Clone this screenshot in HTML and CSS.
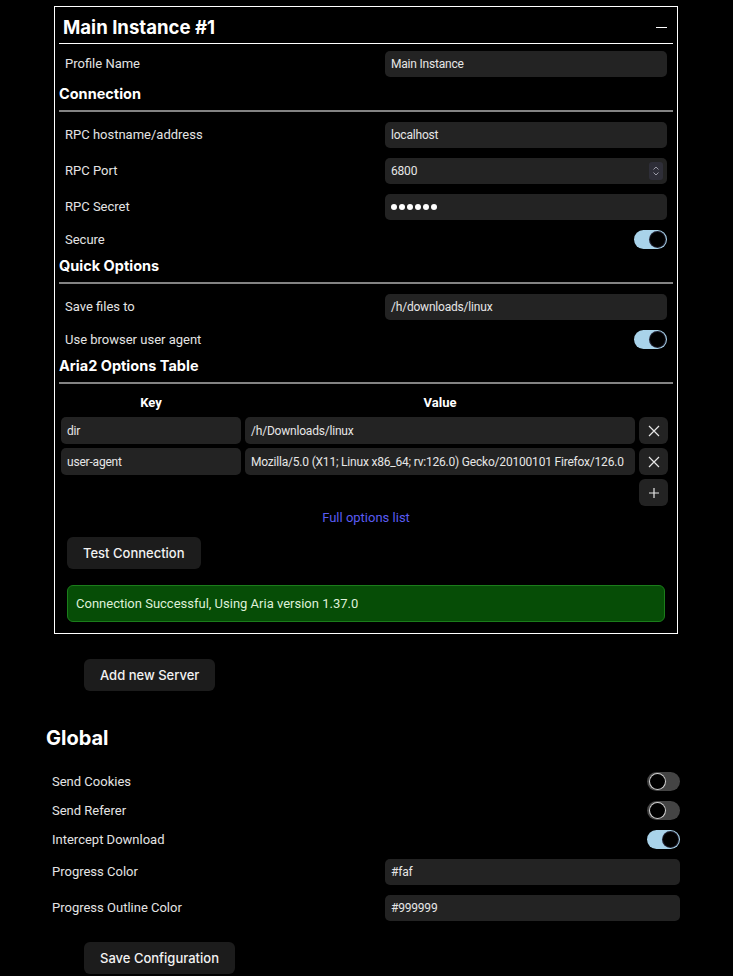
FILE: index.html
```html
<!DOCTYPE html>
<html lang="en">
<head>
<meta charset="utf-8">
<title>Options</title>
<link rel="stylesheet" href="styles.css">
</head>
<body>
<div class="page">
  <section class="card">
    <div class="card-title">
      <span>Main Instance #1</span>
      <span class="collapse"></span>
    </div>
    <div class="row first">
      <span class="label">Profile Name</span>
      <div class="field">Main Instance</div>
    </div>

    <h3 class="section">Connection</h3>
    <div class="row">
      <span class="label">RPC hostname/address</span>
      <div class="field">localhost</div>
    </div>
    <div class="row">
      <span class="label">RPC Port</span>
      <div class="field number"><span class="val">6800</span><span class="spin"><svg width="8" height="12" viewBox="0 0 8 12"><path d="M1.5 4.5 L4 2 L6.5 4.5 M1.5 7.5 L4 10 L6.5 7.5" fill="none" stroke="#9a9aa6" stroke-width="1"/></svg></span></div>
    </div>
    <div class="row">
      <span class="label">RPC Secret</span>
      <div class="field secret"><i></i><i></i><i></i><i></i><i></i><i></i></div>
    </div>
    <div class="row toggle-row">
      <span class="label">Secure</span>
      <span class="toggle on"></span>
    </div>

    <h3 class="section">Quick Options</h3>
    <div class="row">
      <span class="label">Save files to</span>
      <div class="field">/h/downloads/linux</div>
    </div>
    <div class="row toggle-row">
      <span class="label">Use browser user agent</span>
      <span class="toggle on"></span>
    </div>

    <h3 class="section">Aria2 Options Table</h3>
    <div class="opts">
      <div class="th">Key</div>
      <div class="th">Value</div>
      <div></div>
      <div class="cell">dir</div>
      <div class="cell">/h/Downloads/linux</div>
      <div class="icon-btn"><svg width="12" height="12" viewBox="0 0 12 12"><path d="M1 1 L11 11 M11 1 L1 11" stroke="#e6e6e6" stroke-width="1.2" fill="none"/></svg></div>
      <div class="cell">user-agent</div>
      <div class="cell">Mozilla/5.0 (X11; Linux x86_64; rv:126.0) Gecko/20100101 Firefox/126.0</div>
      <div class="icon-btn"><svg width="12" height="12" viewBox="0 0 12 12"><path d="M1 1 L11 11 M11 1 L1 11" stroke="#e6e6e6" stroke-width="1.2" fill="none"/></svg></div>
      <div></div>
      <div></div>
      <div class="icon-btn"><svg width="12" height="12" viewBox="0 0 12 12"><path d="M6 1 V11 M1 6 H11" stroke="#e6e6e6" stroke-width="1.2" fill="none"/></svg></div>
    </div>
    <div class="link-row"><a class="link" href="#">Full options list</a></div>
    <div class="btn-row"><button class="btn">Test Connection</button></div>
    <div class="alert">Connection Successful, Using Aria version 1.37.0</div>
  </section>

  <div class="btn-row outer"><button class="btn">Add new Server</button></div>

  <h2 class="global-title">Global</h2>
  <div class="global">
    <div class="row toggle-row">
      <span class="label">Send Cookies</span>
      <span class="toggle"></span>
    </div>
    <div class="row toggle-row">
      <span class="label">Send Referer</span>
      <span class="toggle"></span>
    </div>
    <div class="row toggle-row">
      <span class="label">Intercept Download</span>
      <span class="toggle on"></span>
    </div>
    <div class="row">
      <span class="label">Progress Color</span>
      <div class="field">#faf</div>
    </div>
    <div class="row">
      <span class="label">Progress Outline Color</span>
      <div class="field">#999999</div>
    </div>
  </div>
  <div class="btn-row outer save"><button class="btn">Save Configuration</button></div>
</div>
</body>
</html>
```

FILE: styles.css
```css
* { box-sizing: border-box; }
html, body { margin: 0; padding: 0; background: #000; }
body {
  color: #e8e8e8;
  font-family: Roboto, Inter, "Noto Sans", sans-serif;
  font-size: 13px;
}
.page {
  width: 640px;
  margin-left: 46px;
  padding-top: 6px;
}
.card {
  margin: 0 8px;
  border: 1px solid #fff;
  padding: 4px;
}
.card-title {
  display: flex;
  align-items: center;
  justify-content: space-between;
  padding: 4px 6px 4px 4px;
  line-height: 24px;
  font-family: Inter, "Noto Sans", sans-serif;
  font-size: 18.6px;
  font-weight: 700;
  color: #fff;
  border-bottom: 1px solid #fff;
}
.collapse {
  width: 11px;
  height: 1px;
  background: #fff;
}
.row {
  display: grid;
  grid-template-columns: 50% 1fr;
  column-gap: 19px;
  align-items: center;
  padding: 0 6px;
  margin-top: 10px;
}
.row.first { margin-top: 7px; }
.label {
  color: #e4e4e4;
  line-height: 16px;
}
.field {
  height: 26px;
  border-radius: 5px;
  background: #232323;
  padding: 0 6px;
  display: flex;
  align-items: center;
  color: #e6e6e6;
  font-family: Roboto, "Noto Sans", sans-serif;
  font-size: 12px;
  letter-spacing: -0.2px;
  white-space: nowrap;
  overflow: hidden;
}
.field.number { justify-content: space-between; padding-right: 4px; }
.spin {
  width: 14px;
  height: 18px;
  border-radius: 3px;
  background: #2e2e38;
  display: flex;
  align-items: center;
  justify-content: center;
}
.secret i {
  display: inline-block;
  width: 6px;
  height: 6px;
  border-radius: 50%;
  background: #fff;
  margin-right: 2px;
}
.toggle-row { height: 19px; }
.toggle {
  justify-self: end;
  width: 33px;
  height: 19px;
  border-radius: 10px;
  background: #444;
  position: relative;
  display: block;
}
.toggle::after {
  content: "";
  position: absolute;
  top: 2px;
  left: 3px;
  width: 15px;
  height: 15px;
  border-radius: 50%;
  background: #000;
  box-shadow: 0 0 0 1px #cfcfcf;
}
.toggle.on { background: #a9d3ea; }
.toggle.on::after {
  left: auto;
  right: 2px;
  box-shadow: 0 0 0 1px #223;
}
.section {
  margin: 7px 0 0 0;
  padding: 0 0 6px 0;
  font-family: Inter, "Noto Sans", sans-serif;
  font-size: 14.5px;
  line-height: 20px;
  font-weight: 700;
  color: #fff;
  border-bottom: 2px solid #838383;
}
.opts {
  display: grid;
  grid-template-columns: 180px 1fr 29px;
  gap: 4px;
  padding: 0 5px 0 2px;
  margin-top: 9px;
}
.th {
  text-align: center;
  font-weight: 700;
  color: #fff;
  line-height: 20px;
}
.cell {
  height: 27px;
  border-radius: 5px;
  background: #232323;
  padding: 0 6px;
  display: flex;
  align-items: center;
  font-family: Roboto, "Noto Sans", sans-serif;
  font-size: 12px;
  letter-spacing: -0.2px;
  color: #e6e6e6;
  white-space: nowrap;
  overflow: hidden;
}
.icon-btn {
  height: 27px;
  border-radius: 6px;
  background: #232323;
  display: flex;
  align-items: center;
  justify-content: center;
}
.link-row {
  text-align: center;
  margin-top: 4px;
  line-height: 16px;
}
.link {
  color: #5a5cf2;
  text-decoration: none;
}
.btn-row { padding-left: 8px; margin-top: 11px; }
.btn {
  height: 32px;
  padding: 0 16px;
  border: 0;
  border-radius: 6px;
  background: #1c1c1c;
  color: #f2f2f2;
  font-family: Inter, "Noto Sans", sans-serif;
  font-size: 13px;
  font-weight: 500;
}
.alert {
  margin: 16px 8px 7px 8px;
  height: 37px;
  border: 1px solid #1b7d1b;
  border-radius: 6px;
  background: #064d06;
  color: #dff0d8;
  padding: 0 8px;
  display: flex;
  align-items: center;
}
.btn-row.outer { padding-left: 38px; margin-top: 25px; }
.global-title {
  margin: 35px 0 0 0;
  font-family: Inter, "Noto Sans", sans-serif;
  font-size: 20px;
  line-height: 24px;
  font-weight: 700;
  color: #fff;
}
.global { margin-top: 22px; }
.btn-row.save { margin-top: 21px; }
```
